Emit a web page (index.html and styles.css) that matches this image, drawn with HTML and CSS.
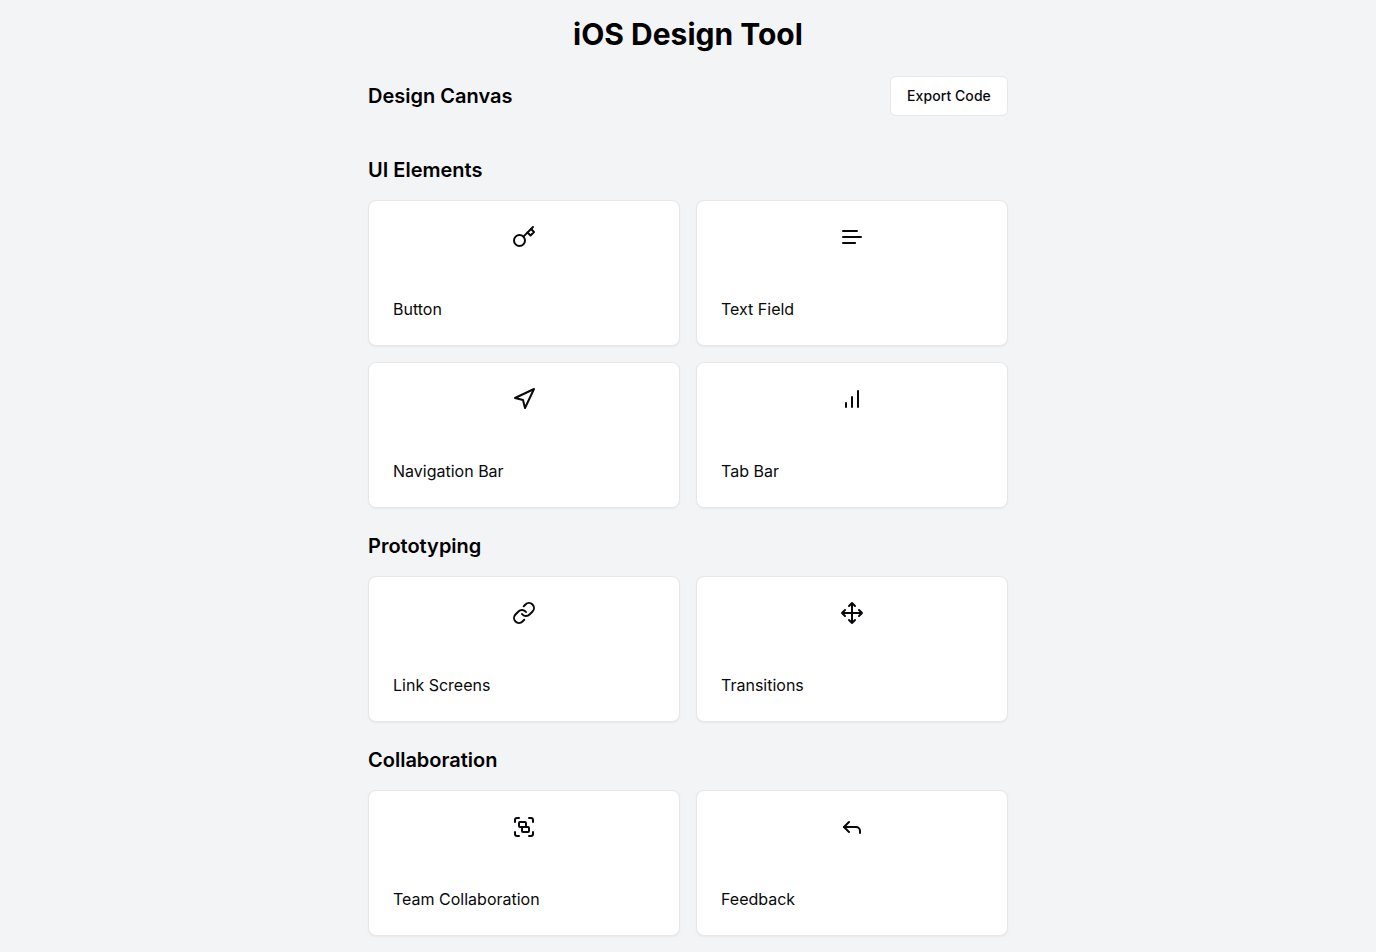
FILE: index.html
```html
<!DOCTYPE html>
<html lang="en">
<head>
<meta charset="utf-8">
<title>iOS Design Tool</title>
<link rel="stylesheet" href="styles.css">
</head>
<body>
<main class="page">
  <h1 class="title">iOS Design Tool</h1>
  <header class="toolbar">
    <h2 class="heading">Design Canvas</h2>
    <button class="export">Export Code</button>
  </header>
  <section class="section">
    <h2 class="heading">UI Elements</h2>
    <div class="grid">
      <div class="card">
        <svg class="icon" viewBox="0 0 24 24"><circle cx="7.5" cy="15.5" r="5.5"/><path d="m21 2-9.6 9.6"/><path d="m15.5 7.5 3 3L22 7l-3-3"/></svg>
        <p class="label">Button</p>
      </div>
      <div class="card">
        <svg class="icon" viewBox="0 0 24 24"><path d="M17 6H3M21 12H3M15.1 18H3"/></svg>
        <p class="label">Text Field</p>
      </div>
      <div class="card">
        <svg class="icon" viewBox="0 0 24 24"><polygon points="3 11 22 2 13 21 11 13 3 11"/></svg>
        <p class="label">Navigation Bar</p>
      </div>
      <div class="card">
        <svg class="icon" viewBox="0 0 24 24"><path d="M12 20V10M18 20V4M6 20v-4"/></svg>
        <p class="label">Tab Bar</p>
      </div>
    </div>
  </section>
  <section class="section">
    <h2 class="heading">Prototyping</h2>
    <div class="grid">
      <div class="card">
        <svg class="icon" viewBox="0 0 24 24"><path d="M10 13a5 5 0 0 0 7.54.54l3-3a5 5 0 0 0-7.07-7.07l-1.72 1.71"/><path d="M14 11a5 5 0 0 0-7.54-.54l-3 3a5 5 0 0 0 7.07 7.07l1.71-1.71"/></svg>
        <p class="label">Link Screens</p>
      </div>
      <div class="card">
        <svg class="icon" viewBox="0 0 24 24"><path d="m5 9-3 3 3 3M9 5l3-3 3 3M15 19l-3 3-3-3M19 9l3 3-3 3M2 12h20M12 2v20"/></svg>
        <p class="label">Transitions</p>
      </div>
    </div>
  </section>
  <section class="section">
    <h2 class="heading">Collaboration</h2>
    <div class="grid">
      <div class="card">
        <svg class="icon" viewBox="0 0 24 24"><path d="M3 7V5c0-1.1.9-2 2-2h2M17 3h2c1.1 0 2 .9 2 2v2M21 17v2c0 1.1-.9 2-2 2h-2M7 21H5c-1.1 0-2-.9-2-2v-2"/><rect width="7" height="5" x="7" y="7" rx="1"/><rect width="7" height="5" x="10" y="12" rx="1"/></svg>
        <p class="label">Team Collaboration</p>
      </div>
      <div class="card">
        <svg class="icon" viewBox="0 0 24 24"><polyline points="9 17 4 12 9 7"/><path d="M20 18v-2a4 4 0 0 0-4-4H4"/></svg>
        <p class="label">Feedback</p>
      </div>
    </div>
  </section>
</main>
</body>
</html>
```
FILE: styles.css
```css
* { box-sizing: border-box; }
body {
  margin: 0;
  height: 952px;
  overflow: hidden;
  background: #f3f4f6;
  color: #09090b;
  font-family: Inter, "Liberation Sans", sans-serif;
}
h1, h2, p { margin: 0; }
.page { width: 640px; margin: 0 auto; padding-top: 16px; }
.title {
  margin-bottom: 24px;
  text-align: center;
  font-size: 30px;
  line-height: 36px;
  font-weight: 700;
  color: #000;
}
.toolbar {
  display: flex;
  align-items: center;
  justify-content: space-between;
  margin-bottom: 40px;
}
.heading { font-size: 20px; line-height: 28px; font-weight: 600; color: #000; }
.export {
  width: 118px;
  height: 40px;
  padding: 0;
  border: 1px solid #e5e7eb;
  border-radius: 6px;
  background: #fff;
  color: #09090b;
  font: 500 14px/20px Inter, "Liberation Sans", sans-serif;
  letter-spacing: .06px;
}
.section { margin-bottom: 24px; }
.grid {
  display: grid;
  grid-template-columns: 1fr 1fr;
  gap: 16px;
  margin-top: 16px;
}
.card {
  height: 146px;
  padding: 24px;
  border: 1px solid #e5e7eb;
  border-radius: 8px;
  background: #fff;
  box-shadow: 0 1px 2px rgba(0, 0, 0, .05);
}
.icon {
  display: block;
  width: 24px;
  height: 24px;
  margin: 0 auto 48px;
  fill: none;
  stroke: currentColor;
  stroke-width: 2;
  stroke-linecap: round;
  stroke-linejoin: round;
}
.label { font-size: 16px; line-height: 24px; }
```
